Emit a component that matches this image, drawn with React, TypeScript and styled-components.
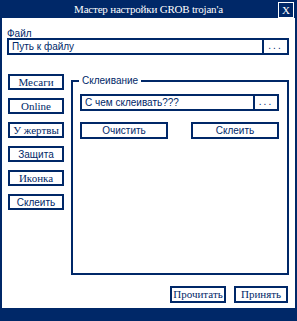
import React from "react"
import styled, { createGlobalStyle } from "styled-components"

const NAVY = "#002868"

const GlobalStyle = createGlobalStyle`
  html, body {
    margin: 0;
    padding: 0;
    background: #ffffff;
  }
  * {
    box-sizing: border-box;
  }
`

const Window = styled.div`
  width: 297px;
  height: 321px;
  display: flex;
  flex-direction: column;
  background: #ffffff;
  color: ${NAVY};
  font-family: "Liberation Sans", Arial, sans-serif;
  font-size: 10px;
  overflow: hidden;
`

const TitleBar = styled.div`
  height: 18px;
  flex: none;
  background: ${NAVY};
  display: flex;
  align-items: center;
  justify-content: center;
  position: relative;
  color: #ffffff;
  font-family: "Liberation Serif", "Times New Roman", serif;
  font-size: 11px;
  letter-spacing: -0.2px;
  padding-bottom: 1px;
`

const CloseButton = styled.button`
  position: absolute;
  top: 2px;
  right: 3px;
  width: 16px;
  height: 16px;
  padding: 0;
  border: 1px solid #ffffff;
  background: ${NAVY};
  color: #ffffff;
  font-family: "Liberation Serif", "Times New Roman", serif;
  font-size: 11px;
  line-height: 13px;
  cursor: pointer;
`

const Content = styled.div`
  flex: 1;
  display: flex;
  flex-direction: column;
`

const Body = styled.div`
  flex: 1;
  border-left: 2px solid ${NAVY};
  border-right: 2px solid ${NAVY};
  padding: 11px 6px 0 5px;
  display: flex;
  flex-direction: column;
`

const Label = styled.div`
  height: 9px;
  line-height: 9px;
`

const PathField = styled.div<{ $browse: number }>`
  height: 17px;
  flex: none;
  display: grid;
  grid-template-columns: 1fr ${p => p.$browse}px;
  border: 2px solid ${NAVY};
`

const PathText = styled.div`
  padding-left: 3px;
  line-height: 13px;
  white-space: nowrap;
  overflow: hidden;
`

const Browse = styled.div`
  border-left: 2px solid ${NAVY};
  text-align: center;
  line-height: 12px;
  letter-spacing: 2px;
`

const Main = styled.div`
  display: flex;
  margin-top: 19px;
  gap: 7px;
  padding-left: 1px;
`

const SideColumn = styled.div`
  display: flex;
  flex-direction: column;
  gap: 8px;
`

const Button = styled.button<{ $serif?: boolean; $w: number; $h?: number }>`
  width: ${p => p.$w}px;
  height: ${p => p.$h ?? 16}px;
  padding: 0;
  border: 2px solid ${NAVY};
  background: #ffffff;
  color: ${NAVY};
  font-family: ${p =>
    p.$serif ? `"Liberation Serif", "Times New Roman", serif` : `"Liberation Sans", Arial, sans-serif`};
  font-size: ${p => (p.$serif ? "11px" : "10px")};
  line-height: 11px;
  white-space: nowrap;
  cursor: pointer;
`

const Group = styled.fieldset`
  flex: 1;
  height: 199px;
  margin: 2px 0 0;
  padding: 8px 8px 0 7px;
  border: 2px solid ${NAVY};
  display: flex;
  flex-direction: column;
  min-width: 0;
`

const Legend = styled.legend`
  margin-left: -1px;
  padding: 0 3px;
  line-height: 10px;
`

const GroupActions = styled.div`
  display: flex;
  justify-content: space-between;
  margin-top: 11px;
`

const Footer = styled.div`
  display: flex;
  justify-content: flex-end;
  gap: 8px;
  margin-top: 11px;
  padding-right: 1px;
`

const BottomBar = styled.div`
  height: 13px;
  flex: none;
  background: ${NAVY};
`

const sideButtons: Array<{ title: string; serif: boolean }> = [
  { title: "Месаги", serif: true },
  { title: "Online", serif: true },
  { title: "У жертвы", serif: true },
  { title: "Защита", serif: false },
  { title: "Иконка", serif: true },
  { title: "Склеить", serif: false },
]

const App: React.FC = () => {
  return (
    <>
      <GlobalStyle />
      <Window>
        <TitleBar>
          Мастер настройки GROB trojan'a
          <CloseButton>X</CloseButton>
        </TitleBar>
        <Content>
          <Body>
            <Label>Файл</Label>
            <PathField $browse={25}>
              <PathText>Путь к файлу</PathText>
              <Browse>...</Browse>
            </PathField>

            <Main>
              <SideColumn>
                {sideButtons.map(b => (
                  <Button key={b.title} $w={56} $serif={b.serif}>
                    {b.title}
                  </Button>
                ))}
              </SideColumn>

              <Group>
                <Legend>Склеивание</Legend>
                <PathField $browse={24}>
                  <PathText>С чем склеивать???</PathText>
                  <Browse>...</Browse>
                </PathField>
                <GroupActions>
                  <Button $w={88} $h={17}>Очистить</Button>
                  <Button $w={88} $h={17}>Склеить</Button>
                </GroupActions>
              </Group>
            </Main>

            <Footer>
              <Button $w={56} $h={17} $serif>Прочитать</Button>
              <Button $w={54} $h={17} $serif>Принять</Button>
            </Footer>
          </Body>
          <BottomBar />
        </Content>
      </Window>
    </>
  )
}

export default App
